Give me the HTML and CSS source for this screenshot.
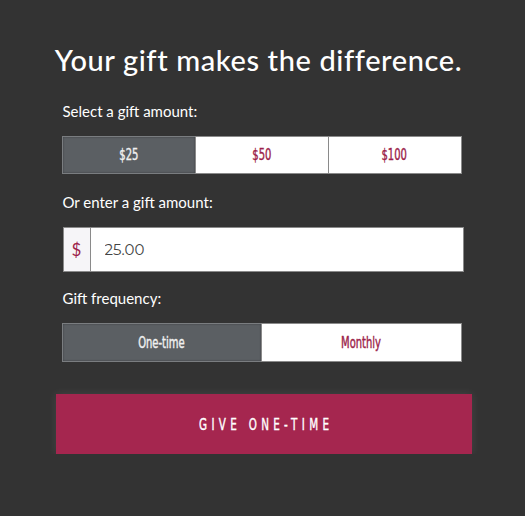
FILE: index.html
```html
<!DOCTYPE html>
<html lang="en">
<head>
    <meta charset="UTF-8">
    <meta name="viewport" content="width=device-width, initial-scale=1.0">
    <title>Give</title>
    <link rel="stylesheet" href="styles.css">
</head>
<body>
    <div class="form">
        <h1 class="title">Your gift makes the difference.</h1>

        <div class="label">Select a gift amount:</div>
        <div class="choices">
            <button class="choice selected"><span class="narrow">$25</span></button>
            <button class="choice"><span class="narrow">$50</span></button>
            <button class="choice"><span class="narrow">$100</span></button>
        </div>

        <div class="label">Or enter a gift amount:</div>
        <div class="amount">
            <span class="currency">$</span>
            <input class="amount-input" type="text" value="25.00">
        </div>

        <div class="label">Gift frequency:</div>
        <div class="choices">
            <button class="choice tall selected"><span class="narrow">One-time</span></button>
            <button class="choice tall"><span class="narrow">Monthly</span></button>
        </div>

        <button class="give"><span class="narrow">GIVE ONE-TIME</span></button>
    </div>
</body>
</html>
```

FILE: styles.css
```css
body {
    margin: 0;
    background-color: #333333;
    font-family: "Lato", Arial, sans-serif;
    color: white;
}
.form {
    width: 400px;
    margin: 0 auto;
    padding: 42px 0 0 0;
    position: relative;
    left: -1px;
}
.title {
    font-family: "Lato", "Open Sans", sans-serif;
    font-weight: 500;
    font-size: 29px;
    text-align: center;
    margin: 0 -36px 25px -42px;
    letter-spacing: 0.6px;
}
.label {
    font-size: 15px;
    margin: 0 0 16px 1px;
}
.choices {
    display: flex;
    margin-bottom: 19px;
}
.choice {
    flex: 1;
    height: 38px;
    background-color: white;
    border: 1px solid #8a8a8a;
    margin-left: -1px;
    color: #9c1f4b;
    font-family: "DejaVu Sans Condensed", sans-serif;
    font-size: 15px;
    cursor: pointer;
}
.choice:first-child {
    margin-left: 0;
}
.choice.tall {
    height: 39px;
}
.choice.selected {
    background-color: #5b5f63;
    border-color: #7a7d80;
    color: #f0f0f0;
    box-shadow: inset 0 0 2px rgba(0,0,0,0.4);
}
.narrow {
    display: inline-block;
    transform: scaleX(0.74);
    -webkit-text-stroke: 0.4px currentColor;
}
.amount {
    display: flex;
    height: 43px;
    margin: 0 -2px 17px 1px;
    border: 1px solid #8a8a8a;
    background-color: white;
}
.currency {
    width: 26px;
    background-color: #f6f5f8;
    border-right: 1px solid #8a8a8a;
    color: #9c1f4b;
    font-size: 17px;
    display: flex;
    align-items: center;
    justify-content: center;
}
.amount-input {
    flex: 1;
    border: none;
    outline: none;
    padding: 0 14px;
    font-family: "Montserrat", "Open Sans", sans-serif;
    font-size: 15px;
    color: #444;
}
.give {
    display: block;
    width: 416px;
    height: 60px;
    margin: 32px -6px 0 -6px;
    border: none;
    background-color: #a5264f;
    color: white;
    font-family: "DejaVu Sans Condensed", sans-serif;
    font-size: 16px;
    letter-spacing: 6px;
    box-shadow: 0 0 9px rgba(255,255,255,0.09);
    cursor: pointer;
}
.give .narrow {
    transform: scaleX(0.72);
    margin-right: -6px;
}
```
